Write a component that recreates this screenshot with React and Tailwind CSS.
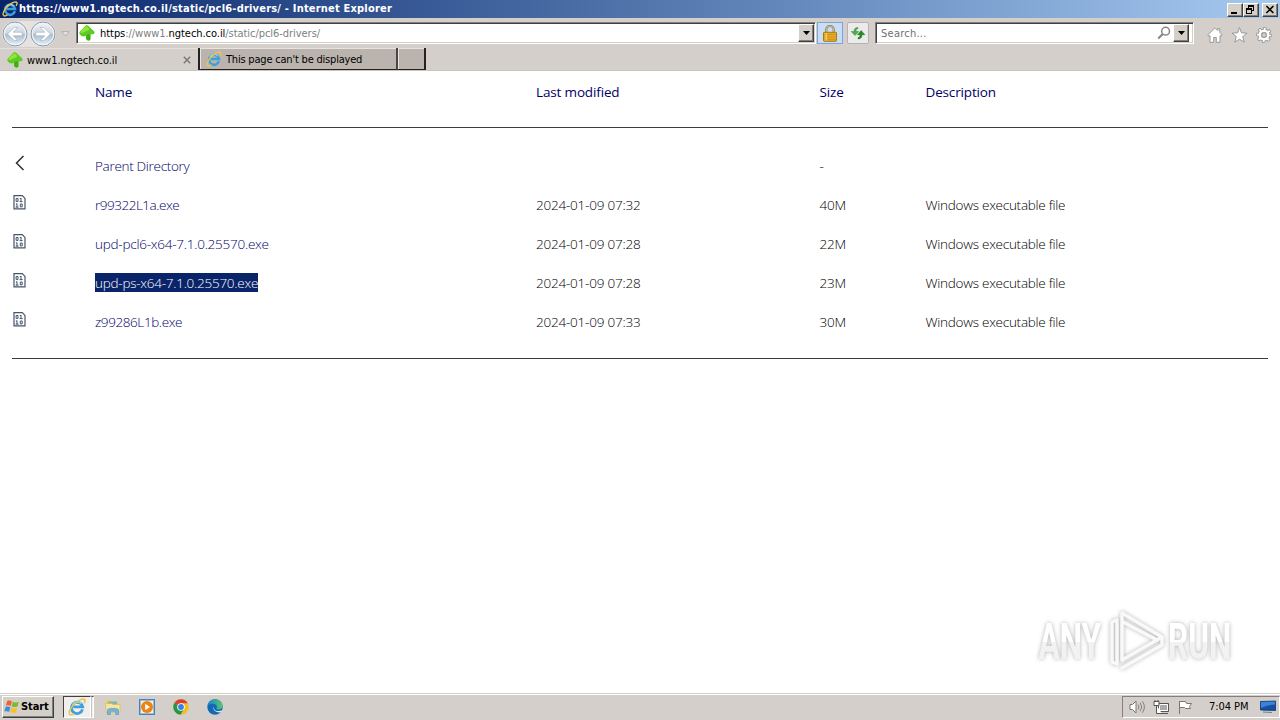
import React from 'react';

const FILES = [
  { name: 'r99322L1a.exe', date: '2024-01-09 07:32', size: '40M', track: 'tracking-[-0.48px]' },
  { name: 'upd-pcl6-x64-7.1.0.25570.exe', date: '2024-01-09 07:28', size: '22M', track: 'tracking-[-0.24px]' },
  { name: 'upd-ps-x64-7.1.0.25570.exe', date: '2024-01-09 07:28', size: '23M', track: 'tracking-[-0.25px]', selected: true },
  { name: 'z99286L1b.exe', date: '2024-01-09 07:33', size: '30M', track: 'tracking-[-0.4px]' },
];

const COLS = 'grid grid-cols-[83px_441px_283.5px_106px_1fr]';
const RAISED = 'border border-t-white border-l-white border-r-[#404040] border-b-[#404040] bg-[#d4d0c8] shadow-[inset_-1px_-1px_0_#808080]';

function IELogo({ className }) {
  return (
    <svg viewBox="0 0 16 16" className={className}>
      <path d="M12.9 10.2A5 5 0 1 1 13 7.9H4.7" fill="none" stroke="#3f9fdc" strokeWidth="2.5" />
      <path d="M11.8 5.1A4.7 4.7 0 0 0 3.9 6.3" fill="none" stroke="#86d6f5" strokeWidth="1.3" />
      <path d="M1.8 14.7C-.5 12.8 3.4 6.6 8 3.4c3.2-2.3 6.2-3 6.9-1.8.4.8 0 2-.8 3.2" fill="none" stroke="#eac54b" strokeWidth="1.4" />
      <path d="M1.8 14.7c1 .6 2.400 0 3.700-.8" fill="none" stroke="#eac54b" strokeWidth="1.4" />
    </svg>
  );
}

function TreeIcon() {
  return (
    <svg viewBox="0 0 16 16" className="h-4 w-4 shrink-0">
      <path d="M7.500.3c.8-.2 1.600.3 2.300 1l5.200 5c.9.9.8 2-.2 2.700-1 .6-2.300.5-3.300.3v4.800c0 .9-.6 1.500-1.600 1.500-1.700 0-2.900-1-2.900-2.600v-2.600c-1 .8-1.800 1.300-2.900 1C2 10.900.3 9.300.3 7.900c0-1 .9-1.700 1.700-2.500l3.700-4C6.300.8 6.900.4 7.500.3z" fill="#5fcb22" />
      <path d="M7.300 1.200c1.200.2 2 1.600 3 2.700-.7 2-3.600 1.800-5.200 3.200C4 8.100 2.800 8.500 1.500 7.600 2.100 5.700 5.700 2.300 7.300 1.200z" fill="#8fe63d" />
      <path d="M7.200 10.100c1.200-.9 2.600-1.200 4.100-.8v4.800c0 .8-.5 1.300-1.400 1.300-1.600 0-2.700-.9-2.700-2.300z" fill="#3fae1a" />
    </svg>
  );
}

function NavArrow({ flip }) {
  return (
    <svg viewBox="0 0 26 26" className={flip ? 'h-[26px] w-[26px] -scale-x-100' : 'h-[26px] w-[26px]'}>
      <defs>
        <linearGradient id="nav" x1="0" y1="0" x2="0" y2="1">
          <stop offset="0" stopColor="#f3f5f9" />
          <stop offset=".48" stopColor="#cdd5df" />
          <stop offset=".52" stopColor="#adbccd" />
          <stop offset="1" stopColor="#e2f4fb" />
        </linearGradient>
      </defs>
      <circle cx="13" cy="13" r="11.9" fill="url(#nav)" stroke="#7d93ab" strokeWidth="1" />
      <circle cx="13" cy="13" r="10.700" fill="none" stroke="#eef3f7" strokeWidth="1.200" />
      <path d="M5.500 13 12.300 6.500h3.400l-4.500 4.700h9v3.600h-9l4.500 4.700h-3.400z" fill="#fff" stroke="#9eadbd" strokeWidth=".6" />
    </svg>
  );
}

function DropButton() {
  return (
    <div className={`flex h-[18px] w-4 shrink-0 items-center justify-center ${RAISED}`}>
      <svg viewBox="0 0 7 4" className="h-1 w-[7px]"><path d="M0 0h7L3.5 4z" fill="#000" /></svg>
    </div>
  );
}

function Field({ className, children }) {
  return (
    <div className={`flex h-[22px] border border-t-[#808080] border-l-[#808080] border-r-white border-b-white bg-white shadow-[inset_1px_1px_0_#404040,inset_-1px_-1px_0_#d4d0c8] ${className}`}>
      {children}
    </div>
  );
}

function TitleBar() {
  return (
    <div className="flex h-[18px] items-center bg-linear-to-r from-[#0a246a] to-[#a6caf0] pr-[2px] pl-[2px]">
      <IELogo className="h-4 w-4" />
      <span className="ml-[1px] pt-px text-[11px] font-bold tracking-[0.2px] whitespace-pre text-white">https://www1.ngtech.co.il/static/pcl6-drivers/ - Internet Explorer</span>
      <div className="ml-auto flex pt-px">
        <div className={`h-[14px] w-4 ${RAISED}`}>
          <svg viewBox="0 0 14 12" className="h-3 w-[14px]"><path d="M3 8h6v2H3z" /></svg>
        </div>
        <div className={`h-[14px] w-4 ${RAISED}`}>
          <svg viewBox="0 0 14 12" className="h-3 w-[14px]" fill="none" stroke="#000" shapeRendering="crispEdges">
            <path d="M4 1.5h6M4.5 2v2M9.5 2v4.500H8M2 4.500h6M2.500 5v4.500h5V5M2 5.500h6M4 2.500h6" />
          </svg>
        </div>
        <div className={`ml-[3px] h-[14px] w-4 ${RAISED}`}>
          <svg viewBox="0 0 14 12" className="h-3 w-[14px]"><path d="m3.400 2 7 7m0-7-7 7" stroke="#000" strokeWidth="1.600" /></svg>
        </div>
      </div>
    </div>
  );
}

function Toolbar() {
  return (
    <div className="flex h-[30px] items-start border-t border-[#d4d0c8] pt-[3px]">
      <div className="-mt-[1px] ml-[2px] flex gap-[2px] rounded-full bg-[#f0efed]/60">
        <NavArrow />
        <NavArrow flip />
      </div>
      <svg viewBox="0 0 9 6" className="mt-[9px] ml-[5px] h-[6px] w-[9px]"><path d="M.8.6h7.400L4.500 5z" fill="#e7e4e1" stroke="#aaa6a2" strokeWidth=".8" /></svg>
      <Field className="ml-[6px] w-[740px] items-center pr-[1px] pl-[2px]">
        <TreeIcon />
        <span className="ml-[5px] flex-1 pt-[2px] text-[11px] tracking-[-0.05px] whitespace-pre text-[#808080]">
          <span className="text-black">https</span>
          <span>://www1.</span>
          <span className="text-black">ngtech.co.il</span>
          <span>/static/pcl6-drivers/</span>
        </span>
        <DropButton />
      </Field>
      <div className="ml-px flex h-[22px] w-[26px] items-center justify-center border border-[#7ba6dc] bg-[#c9def5]">
        <svg viewBox="0 0 14 17" className="h-[17px] w-[14px]">
          <path d="M3.300 8V4.600a3.700 3.700 0 0 1 7.400 0V8" fill="none" stroke="#8c7951" strokeWidth="2.200" />
          <path d="M3.300 8V4.600a3.700 3.700 0 0 1 7.400 0V8" fill="none" stroke="#dfd5b4" strokeWidth=".8" />
          <rect x=".5" y="7.300" width="13" height="9" rx=".7" fill="#e9ad25" stroke="#a87613" />
          <path d="M1.500 9.500h11M1.500 12h11M1.500 14.300h11" stroke="#c88c16" strokeWidth=".8" />
          <path d="M3.200 8v7.500" stroke="#ffe28a" />
        </svg>
      </div>
      <div className="ml-1 flex h-[22px] w-[22px] items-center justify-center rounded-[2px] border border-[#b5b2b0] bg-[#ebebeb]">
        <svg viewBox="0 0 16 14" className="h-[14px] w-4">
          <path d="M8 1.500C5 1.500 4 3 4 5.500H1.200L5 9.500l3.700-4H6C6 4 6.500 3 8 2.600z" fill="#55a84c" stroke="#398c37" strokeWidth=".5" />
          <path d="M8 12.900c3 0 4-1.500 4-4.200h2.800L11.200 4.500 7.400 8.700H10c0 1.600-.6 2.600-2 3z" fill="#268a27" stroke="#1b741f" strokeWidth=".5" />
        </svg>
      </div>
      <Field className="ml-[6px] w-[319px] items-center pr-[4px] pl-[5px]">
        <span className="flex-1 pt-[2px] text-[11px] tracking-[0.25px] text-[#707070]">Search...</span>
        <svg viewBox="0 0 14 14" className="mr-[2px] h-[14px] w-[14px]" fill="none" stroke="#858585">
          <circle cx="8.600" cy="5.200" r="3.900" strokeWidth="1.500" />
          <path d="M5.700 8 1.200 12.500" strokeWidth="2" />
        </svg>
        <DropButton />
      </Field>
      <div className="mt-[5px] ml-[13px] flex gap-[8px]">
        <svg viewBox="0 0 16 16" className="h-4 w-4"><path d="M8 .8.700 8l1.400 1.300.9-.8v6.800h3.700v-4.800h2.600v4.800H13V8.500l.9.800L15.300 8 12.800 5.500V1.600h-2v2z" fill="#fff" stroke="#929292" strokeWidth=".9" /></svg>
        <svg viewBox="0 0 16 16" className="h-4 w-[17px]"><path d="m8 .6 2 5.300 5.500.2-4.300 3.500 1.500 5.600L8 12.100l-4.700 3.100 1.500-5.600L.5 6.100 6 5.900z" fill="#fff" stroke="#929292" strokeWidth=".9" /></svg>
        <svg viewBox="0 0 16 16" className="h-4 w-4">
          <circle cx="8" cy="8" r="6.400" fill="none" stroke="#929292" strokeWidth="3.200" strokeDasharray="2.900 2.127" strokeDashoffset="1.450" />
          <circle cx="8" cy="8" r="4.500" fill="none" stroke="#929292" strokeWidth="4" />
          <circle cx="8" cy="8" r="6" fill="none" stroke="#fff" strokeWidth="2.400" strokeDasharray="1.700 3.012" strokeDashoffset=".850" />
          <circle cx="8" cy="8" r="4.300" fill="none" stroke="#fff" strokeWidth="2.500" />
          <circle cx="8" cy="8" r="2.300" fill="#d4cfca" stroke="#929292" strokeWidth=".8" />
        </svg>
      </div>
    </div>
  );
}

function Tabs() {
  return (
    <div className="flex h-[23px] border-b border-[#c9c5c1] text-[11px] text-black">
      <div className="flex h-[22px] w-[198px] items-center border-t border-[#e4e1dd] pt-px pl-[7px]">
        <TreeIcon />
        <span className="ml-1 pt-[2px] tracking-[-0.05px]">www1.ngtech.co.il</span>
        <svg viewBox="0 0 8 8" className="mr-[7px] ml-auto h-2 w-2"><path d="m.8.8 6.400 6.400m0-6.400L.8 7.200" stroke="#7e7a77" strokeWidth="1.500" /></svg>
      </div>
      <div className="flex h-[22px] w-[200px] items-center border-r-2 border-b border-l-2 border-[#24211f] border-r-[#4a4643] bg-[#bbb4ae] pt-px pl-[6px] shadow-[inset_1px_1px_0_#e8e4e0]">
        <IELogo className="h-4 w-4" />
        <span className="ml-[4px] pt-[2px] tracking-[-0.2px]">This page can't be displayed</span>
      </div>
      <div className="h-[22px] w-[28px] border-r-2 border-b border-[#24211f] bg-[#bbb4ae] shadow-[inset_1px_1px_0_#e8e4e0]" />
    </div>
  );
}

function BinaryIcon() {
  return (
    <svg viewBox="0 0 13 15" className="mt-[9px] ml-[1px] h-[15px] w-[13px]" fill="none" stroke="#46566a">
      <path d="M1 .7h8.300L12 3.400v10.400H1z" strokeWidth="1.200" />
      <path d="M3.100 3.500h1.900v2.900H3.100zM8 3v3.900M6.800 3.500H8M6.600 6.600h3M4 8.500v3.900M2.900 9H4M2.600 12.100h3M7.300 9h1.900v2.900H7.300z" strokeWidth="1" />
    </svg>
  );
}

function Listing() {
  return (
    <div className="h-[622px] bg-white px-3 font-['Open_Sans','Noto_Sans',sans-serif] text-[13.5px] font-light text-black">
      <div className={`${COLS} h-[57px] border-b border-[#3c3c3c] pt-[11px] leading-[20px] font-normal tracking-[-0.15px] text-[#000066]`}>
        <span />
        <span>Name</span>
        <span>Last modified</span>
        <span>Size</span>
        <span>Description</span>
      </div>
      <div className="h-[231px] border-b border-[#3c3c3c] pt-[19px] leading-[39px]">
        <div className={`${COLS} h-[39px]`}>
          <svg viewBox="0 0 10 16" className="mt-[8px] ml-[3px] h-4 w-[10px]"><path d="M8.500 1 1.500 8l7 7" fill="none" stroke="#303030" strokeWidth="1.500" /></svg>
          <span className="tracking-[-0.3px] text-[#000066]">Parent Directory</span>
          <span />
          <span>-</span>
        </div>
        {FILES.map((f) => (
          <div key={f.name} className={`${COLS} h-[39px]`}>
            <BinaryIcon />
            <span className={`flex items-start text-[#000066] ${f.track}`}>
              <span className={f.selected ? 'mt-[9px] h-[19px] bg-[#0a246a] leading-[21px] text-white' : ''}>{f.name}</span>
            </span>
            <span className="tracking-[-0.22px]">{f.date}</span>
            <span className="tracking-[-0.2px]">{f.size}</span>
            <span className="tracking-[-0.26px]">Windows executable file</span>
          </div>
        ))}
      </div>
    </div>
  );
}

function Watermark() {
  return (
    <svg viewBox="0 0 240 70" className="absolute top-[606px] left-[1030px] h-[70px] w-[240px] overflow-visible drop-shadow-[0_0_2px_rgba(0,0,0,0.3)]">
      <defs>
        <linearGradient id="mark" x1="0" y1="0" x2="0" y2="1">
          <stop offset=".5" stopColor="#ffffff" />
          <stop offset=".5" stopColor="#f2f2f2" />
        </linearGradient>
      </defs>
      <g fill="url(#mark)" className="font-['Roboto',sans-serif] text-[50px] font-bold">
        <text transform="translate(8.500 53) scale(.63 1)">ANY</text>
        <text transform="translate(138 53) scale(.63 1)">RUN</text>
      </g>
      <g fill="none" stroke="#f9f9f9" strokeWidth="3.500" strokeLinejoin="round" strokeLinecap="round">
        <path d="M92 53V7l40 24-40 23" />
        <path d="m93 16 34 18" />
        <path d="M87 14l-5 2v40l5 2V16" />
        <path d="m92 62 40-23v-7" />
      </g>
    </svg>
  );
}

function Taskbar() {
  return (
    <div className="flex h-[27px] items-start border-t border-[#d4d0c8] bg-[#d4cfca] pt-[2px] text-[11px] text-black shadow-[inset_0_1px_0_#fff]">
      <div className={`ml-[2px] flex h-[22px] w-[52px] items-center pl-[1px] ${RAISED}`}>
        <svg viewBox="0 0 16 16" className="h-4 w-4">
          <path d="M3.200 2c1.800-.8 3.300-.6 4.700.3L6.700 7C5.200 6.200 3.600 6.200 1.900 6.800z" fill="#ec632f" />
          <path d="M8.800 2.700c1.800.9 3.800 1 6 .1l-1.300 4.700c-2.100.8-4 .8-5.900-.1z" fill="#7db935" />
          <path d="M1.600 7.900c1.700-.7 3.300-.6 4.800.3l-1.200 4.600c-1.500-.8-3.200-.9-4.900-.2z" fill="#3a8edb" />
          <path d="M7.300 8.600c1.900.9 3.900 1 5.900.2L12 13.300c-2 .8-4 .7-5.900-.2z" fill="#f9bf2d" />
        </svg>
        <span className="ml-[1px] pt-px font-bold tracking-[-0.1px]">Start</span>
      </div>
      <div className="ml-[9px] flex h-[22px] w-[28px] items-center justify-center border border-t-[#404040] border-r-white border-b-white border-l-[#404040] bg-[#f1efed]">
        <IELogo className="h-[18px] w-[18px]" />
      </div>
      <div className="h-[22px] w-[3px] border border-t-[#404040] border-r-white border-b-white border-l-[#c8c4c0] bg-[#f1efed]" />
      <svg viewBox="0 0 18 18" className="mt-[2px] ml-[10px] h-[18px] w-[18px]">
        <path d="M2 2h5l1 1.500h7V15H2z" fill="#e9cf72" />
        <path d="M4 3.500h9v4H4z" fill="#7bb9ac" />
        <path d="M1.500 5.500h6l1.500 1h7V14h-14z" fill="#f5e5a2" stroke="#d7b655" strokeWidth=".6" />
        <path d="M3.500 16.500v-4.800c0-1.500 11-1.500 11 0v4.800h-2.800v-3.300H6.300v3.300z" fill="#71b9df" stroke="#4a92bc" strokeWidth=".6" />
      </svg>
      <svg viewBox="0 0 16 16" className="mt-[3px] ml-[17px] h-4 w-4">
        <rect x=".5" y=".5" width="15" height="15" fill="#92bfdf" stroke="#4285b8" />
        <rect x="2" y="2" width="12" height="12" fill="#fff0d9" />
        <circle cx="8" cy="8" r="6" fill="#ee8215" />
        <path d="M6.200 4.800 11 8l-4.800 3.200z" fill="#fff" />
      </svg>
      <svg viewBox="0 0 16 16" className="mt-[3px] ml-[18px] h-4 w-4">
        <circle cx="8" cy="8" r="7.700" fill="#efbf27" />
        <path d="M8 8 1.300 4.100A7.700 7.700 0 0 1 14.700 4.300H8z" fill="#dc3e31" />
        <path d="M8 8 1.300 4.100A7.700 7.700 0 0 0 7.400 15.700L11 10z" fill="#249848" />
        <circle cx="8" cy="8" r="3.800" fill="#fff" />
        <circle cx="8" cy="8" r="2.900" fill="#397fe5" />
      </svg>
      <svg viewBox="0 0 16 16" className="mt-[3px] ml-[18px] h-4 w-4">
        <defs>
          <linearGradient id="edge" x1="0" x2="1"><stop stopColor="#1884ce" /><stop offset="1" stopColor="#57c770" /></linearGradient>
        </defs>
        <circle cx="8" cy="8" r="7.700" fill="#1467b3" />
        <path d="M.4 7C1.200 3 4.300.3 8 .3c4.400 0 7.700 3 7.700 6.300 0 2.500-2 3.900-4.300 3.900-1.700 0-2.300-.5-1.700-1.300C11 6.500 8.300 4.700 5.500 4.700 3 4.700 1 5.700.4 7z" fill="url(#edge)" />
        <path d="M7 7.300c-1.100 3.200 2 6 6.900 4.300l1.500.2-1 1.300c-5 1.400-9.700-2.300-7.400-5.800z" fill="#d4e9f2" />
      </svg>
      <div className="ml-auto flex h-[22px] w-[158px] items-center border border-t-[#808080] border-r-white border-b-white border-l-[#808080] pl-[6px]">
        <svg viewBox="0 0 16 16" className="h-4 w-4" fill="none" stroke="#777">
          <path d="M1 5.500h2.500L7 2v12l-3.500-3.500H1z" fill="#fff" />
          <path d="M9 5.500q2 2.500 0 5M11.200 3.800q3 4.200 0 8.400M13.400 2.300q4 5.700 0 11.400" strokeWidth=".9" />
        </svg>
        <svg viewBox="0 0 17 16" className="ml-2 h-4 w-[17px]" fill="none" stroke="#555">
          <path d="M5.500 4.500h10v8h-10z" fill="#aaa" /><path d="M6.500 5.500h8v6h-8z" stroke="#fff" />
          <path d="M1 2.500h5v4H1zM2 1v1.500M5 1v1.500M3.500 6.500v8H9M8 14.500h7" fill="#fff" />
        </svg>
        <svg viewBox="0 0 16 16" className="ml-[7px] h-4 w-4" fill="#fff" stroke="#777"><path d="M2.500 15V2M2.500 2.500h6l1 2h5l-2 3 1 2h-5l-1-1h-5" /></svg>
        <span className="ml-[16px] pt-px tracking-[-0.05px]">7:04 PM</span>
        <svg viewBox="0 0 16 14" className="mr-[3px] ml-auto h-[14px] w-4">
          <path d="M.5 1.500 15.500 1v9.500L.5 10z" fill="#164fa4" stroke="#0e3268" strokeWidth=".8" />
          <path d="m1 2 14-.5v3Q7 5 1 8z" fill="#3984d6" />
          <path d="m3 11.500 9 .5v1l-9-.5z" fill="#64809e" />
        </svg>
      </div>
    </div>
  );
}

export default function App() {
  return (
    <div className="relative h-[720px] w-[1280px] overflow-hidden bg-[#d4cfca] font-['DejaVu_Sans_Condensed','DejaVu_Sans',sans-serif]">
      <TitleBar />
      <Toolbar />
      <Tabs />
      <Listing />
      <Watermark />
      <Taskbar />
    </div>
  );
}
